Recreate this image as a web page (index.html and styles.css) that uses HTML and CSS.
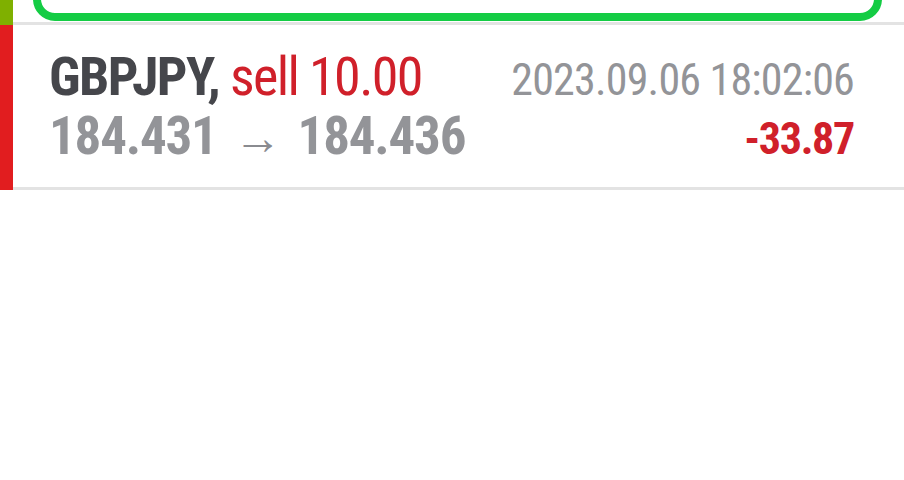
FILE: index.html
```html
<!DOCTYPE html>
<html lang="en">
<head>
  <meta charset="UTF-8">
  <meta name="viewport" content="width=device-width, initial-scale=1.0">
  <title>History</title>
  <link rel="stylesheet" href="styles.css">
</head>
<body>
  <div class="list">
    <div class="item item-top">
      <div class="bar bar-green"></div>
      <div class="content content-top">
        <div class="selected-box"></div>
      </div>
    </div>

    <div class="item">
      <div class="bar bar-red"></div>
      <div class="content">
        <div class="line">
          <span class="title"><span class="symbol">GBPJPY,</span> <span class="type">sell 10.00</span></span>
          <span class="time">2023.09.06 18:02:06</span>
        </div>
        <div class="line">
          <span class="prices">184.431 <span class="arrow">&rarr;</span> 184.436</span>
          <span class="profit">-33.87</span>
        </div>
      </div>
    </div>
  </div>
</body>
</html>
```

FILE: styles.css
```css
body {
  margin: 0;
  font-family: Roboto, "Liberation Sans", sans-serif;
  font-stretch: 75%;
  background-color: #fff;
}

.item {
  display: flex;
}

.bar {
  width: 13px;
  flex-shrink: 0;
}

.bar-green {
  background-color: #7fb000;
}

.bar-red {
  background-color: #e11d1f;
}

.content {
  flex: 1;
  border-bottom: 3px solid #e3e3e3;
  padding: 20px 50px 26px 36px;
}

.item-top {
  height: 25px;
}

.content-top {
  height: 22px;
  padding: 0 22px 0 20px;
  display: flex;
  align-items: flex-end;
  overflow: hidden;
}

.selected-box {
  flex: 1;
  height: 60px;
  margin-bottom: 1px;
  border: 8px solid #14cc44;
  border-radius: 22px;
}

.line {
  display: flex;
  justify-content: space-between;
  align-items: baseline;
  height: 56px;
}

.line + .line {
  margin-top: 4px;
}

.title {
  font-size: 54px;
  letter-spacing: -1.6px;
}

.symbol {
  font-weight: 700;
  color: #45464b;
}

.type {
  color: #d0202a;
}

.time {
  font-size: 44px;
  letter-spacing: -0.8px;
  color: #939498;
}

.prices {
  font-size: 53px;
  font-weight: 700;
  letter-spacing: -1.2px;
  color: #939498;
}

.arrow {
  font-weight: 400;
  font-size: 48px;
  margin: 0 6px 0 6px;
  color: #8a8b90;
}

.profit {
  font-size: 44px;
  font-weight: 700;
  letter-spacing: -1.3px;
  color: #d0202a;
}
```
